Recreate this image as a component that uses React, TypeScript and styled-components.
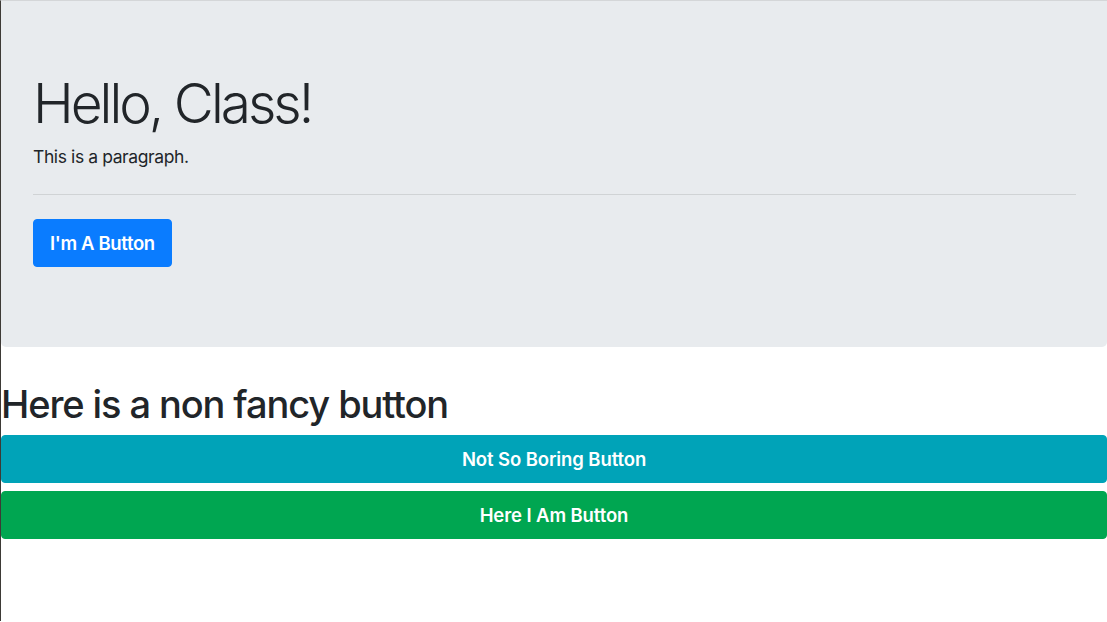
import * as React from "react";
import styled, { createGlobalStyle } from "styled-components";

const GlobalStyle = createGlobalStyle`
  html, body {
    margin: 0;
    padding: 0;
    background: #ffffff;
  }
  body {
    font-family: Inter, "Liberation Sans", sans-serif;
    color: #212529;
    -webkit-font-smoothing: antialiased;
  }
`;

const Page = styled.div`
  min-height: 621px;
  border-top: 1px solid #d4d6d8;
  border-left: 1px solid #3d3a36;
  box-sizing: border-box;
`;

const Jumbotron = styled.div`
  background: #e8ebee;
  border-radius: 0 0 5px 5px;
  padding: 69px 31px 80px 32px;
  margin-bottom: 35px;
`;

const DisplayTitle = styled.h1`
  margin: 0 0 8px;
  font-size: 55px;
  font-weight: 300;
  line-height: 1.2;
  letter-spacing: -3px;
`;

const Lead = styled.p`
  margin: 0;
  font-size: 17.5px;
  font-weight: 400;
  line-height: 1.5;
  letter-spacing: -0.4px;
`;

const Rule = styled.hr`
  margin: 24px 0;
  border: 0;
  border-top: 1px solid rgba(0, 0, 0, 0.1);
`;

const Heading = styled.h1`
  margin: 0 0 7px;
  font-size: 38px;
  font-weight: 500;
  line-height: 1.2;
  letter-spacing: -1.1px;
`;

const Button = styled.button<{ $bg: string; $block?: boolean }>`
  display: ${p => (p.$block ? "block" : "inline-block")};
  width: ${p => (p.$block ? "100%" : "auto")};
  box-sizing: border-box;
  height: 48px;
  padding: 0 16px;
  border: 1px solid ${p => p.$bg};
  border-radius: 4px;
  background: ${p => p.$bg};
  color: #ffffff;
  font-family: Inter, "Liberation Sans", sans-serif;
  font-size: 18.5px;
  font-weight: 600;
  letter-spacing: ${p => (p.$block ? "-0.1px" : "-0.35px")};
  cursor: pointer;

  & + & {
    margin-top: 8px;
  }
`;

export default function App() {
  return (
    <>
      <GlobalStyle />
      <Page>
        <Jumbotron>
          <DisplayTitle>Hello, Class!</DisplayTitle>
          <Lead>This is a paragraph.</Lead>
          <Rule />
          <Button $bg="#0a7cff">I'm A Button</Button>
        </Jumbotron>
        <Heading>Here is a non fancy button</Heading>
        <Button $bg="#00a3b8" $block>
          Not So Boring Button
        </Button>
        <Button $bg="#00a651" $block>
          Here I Am Button
        </Button>
      </Page>
    </>
  );
}
